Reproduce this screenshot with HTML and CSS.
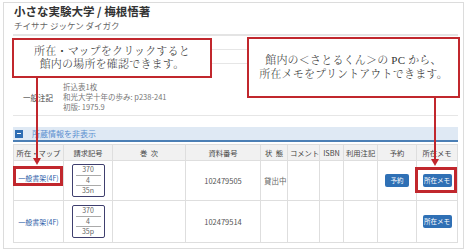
FILE: index.html
```html
<!DOCTYPE html>
<html lang="ja">
<head>
    <meta charset="UTF-8">
    <meta name="viewport" content="width=device-width, initial-scale=1.0">
    <title>小さな実験大学 / 梅根悟著</title>
    <link rel="stylesheet" href="styles.css">
</head>
<body>
    <div class="record">
        <div class="record-head">
            <h1 class="record-title">小さな実験大学 / 梅根悟著</h1>
            <div class="record-kana">チイサナ ジッケン ダイガク</div>
        </div>

        <div class="detail">
            <div class="detail-row"></div>
            <div class="detail-row"></div>
            <div class="detail-row detail-note">
                <div class="detail-label">一般注記</div>
                <div class="detail-value">
                    折込表1枚<br>
                    和光大学十年の歩み: p238-241<br>
                    初版: 1975.9
                </div>
            </div>
        </div>

        <div class="holdings-toggle"><span class="toggle-icon"></span>所蔵情報を非表示</div>

        <table class="holdings">
            <colgroup>
                <col style="width:50px">
                <col style="width:49px">
                <col style="width:73px">
                <col style="width:75px">
                <col style="width:27px">
                <col style="width:32px">
                <col style="width:24px">
                <col style="width:34px">
                <col style="width:39px">
                <col style="width:41px">
            </colgroup>
            <thead>
                <tr>
                    <th>所在・マップ</th>
                    <th>請求記号</th>
                    <th>巻 &nbsp;次</th>
                    <th>資料番号</th>
                    <th>状 &nbsp;態</th>
                    <th>コメント</th>
                    <th>ISBN</th>
                    <th>利用注記</th>
                    <th>予約</th>
                    <th>所在メモ</th>
                </tr>
            </thead>
            <tbody>
                <tr class="row-first">
                    <td class="shelf"><a href="#" class="shelf-link">一般書架(4F)</a></td>
                    <td><div class="callno"><span>370</span><span>4</span><span>35n</span></div></td>
                    <td></td>
                    <td>102479505</td>
                    <td class="status">貸出中</td>
                    <td></td>
                    <td></td>
                    <td></td>
                    <td><a href="#" class="btn btn-reserve">予約</a></td>
                    <td><a href="#" class="btn btn-memo">所在メモ</a></td>
                </tr>
                <tr class="row-second">
                    <td class="shelf"><a href="#" class="shelf-link">一般書架(4F)</a></td>
                    <td><div class="callno"><span>370</span><span>4</span><span>35p</span></div></td>
                    <td></td>
                    <td>102479514</td>
                    <td class="status"></td>
                    <td></td>
                    <td></td>
                    <td></td>
                    <td></td>
                    <td><a href="#" class="btn btn-memo">所在メモ</a></td>
                </tr>
            </tbody>
        </table>

        <!-- 説明用の吹き出し -->
        <div class="callout callout-map">所在・マップをクリックすると<br>館内の場所を確認できます。</div>
        <div class="callout callout-memo">館内の＜さとるくん＞の PC から、<br>所在メモをプリントアウトできます。</div>

        <svg class="annotations" width="467" height="250" viewBox="0 0 467 250">
            <line x1="37" y1="78" x2="37" y2="159" stroke="#c1272d" stroke-width="2"/>
            <polygon points="33,158 41,158 37,165" fill="#c1272d"/>
            <rect x="14.5" y="167.5" width="47" height="17" fill="none" stroke="#c1272d" stroke-width="3"/>

            <line x1="435" y1="98" x2="435" y2="160" stroke="#c1272d" stroke-width="2"/>
            <polygon points="431,159 439,159 435,166" fill="#c1272d"/>
            <rect x="416.5" y="168.5" width="39" height="23" fill="none" stroke="#c1272d" stroke-width="3"/>
        </svg>
    </div>
</body>
</html>
```

FILE: styles.css
```css
* {
    box-sizing: border-box;
}

body {
    margin: 0;
    background: #fff;
    font-family: "Noto Sans CJK JP", sans-serif;
    color: #555;
}

.record {
    position: relative;
    width: 461px;
    height: 247px;
    margin: 2px 0 0 3px;
    padding: 0 5px 0 9px;
    border: 1px solid #dcdcdc;
}

.record-head {
    padding: 0 0 3px 1px;
    border-bottom: 2px solid #e4e4e4;
}

.record-title {
    margin: 0;
    font-size: 11.5px;
    line-height: 16px;
    font-weight: 700;
    color: #333;
}

.record-kana {
    font-size: 8.5px;
    line-height: 12px;
    color: #666;
}

.detail-row {
    display: flex;
    height: 14px;
    border-bottom: 1px solid #e6e6e6;
}

.detail-note {
    height: auto;
    align-items: center;
    padding: 18px 0 3px;
}

.detail-label {
    width: 50px;
    padding-right: 10px;
    text-align: right;
    font-size: 7.5px;
    color: #444;
}

.detail-value {
    font-size: 7.5px;
    line-height: 10px;
    color: #777;
}

.holdings-toggle {
    display: flex;
    align-items: center;
    height: 15px;
    margin-top: 11px;
    padding-left: 2px;
    background: #dfe9f4;
    border-bottom: 2px solid #4b7fb5;
    font-size: 8px;
    color: #5b8fd0;
}

.toggle-icon {
    position: relative;
    width: 8px;
    height: 8px;
    margin-right: 9px;
    background: #2e6db3;
}

.toggle-icon::after {
    content: "";
    position: absolute;
    left: 2px;
    top: 3.5px;
    width: 4px;
    height: 1px;
    background: #fff;
}

.holdings {
    width: 444px;
    margin-top: 2px;
    border-collapse: collapse;
    table-layout: fixed;
    font-size: 7.5px;
}

.holdings th,
.holdings td {
    border: 1px solid #dedede;
    padding: 0 2px;
    text-align: center;
    vertical-align: middle;
    white-space: nowrap;
}

.holdings th {
    height: 16px;
    background: #f1f1f1;
    font-weight: 400;
    font-size: 7.3px;
    color: #444;
}

.row-first td {
    height: 40px;
}

.row-first td.shelf {
    padding-bottom: 7px;
}

.row-second td {
    height: 42px;
}

.holdings td.status {
    text-align: left;
    padding-left: 3px;
    color: #666;
}

.shelf-link {
    font-size: 7px;
    color: #2b5ca8;
    text-decoration: none;
}

.callno {
    display: inline-block;
    width: 33px;
    padding: 0 3px;
    border: 1px solid #3f3f6e;
    border-radius: 2px;
    font-size: 7px;
    color: #666;
}

.callno span {
    display: block;
    line-height: 9.5px;
    border-bottom: 1px solid #aaa;
}

.callno span:last-child {
    border-bottom: 0;
}

.btn {
    display: inline-block;
    background: #2f70b5;
    color: #fff;
    border-radius: 2px;
    font-size: 6.5px;
    text-align: center;
    text-decoration: none;
}

.btn-reserve {
    width: 24px;
    line-height: 13px;
}

.btn-memo {
    width: 29px;
    line-height: 13px;
}

.callout {
    position: absolute;
    display: flex;
    align-items: center;
    justify-content: center;
    text-align: center;
    background: #fff;
    border: 2px solid #c1272d;
    font-family: "Liberation Serif", "Noto Serif CJK JP", "Noto Sans CJK JP", serif;
    font-size: 11px;
    font-weight: 300;
    line-height: 13.5px;
    letter-spacing: 0.2px;
    color: #333;
}

.callout-map {
    left: 8px;
    top: 35px;
    width: 200px;
    height: 40px;
}

.callout-memo {
    left: 243px;
    top: 34px;
    width: 213px;
    height: 61px;
}

.annotations {
    position: absolute;
    left: -4px;
    top: -3px;
    pointer-events: none;
}
```
